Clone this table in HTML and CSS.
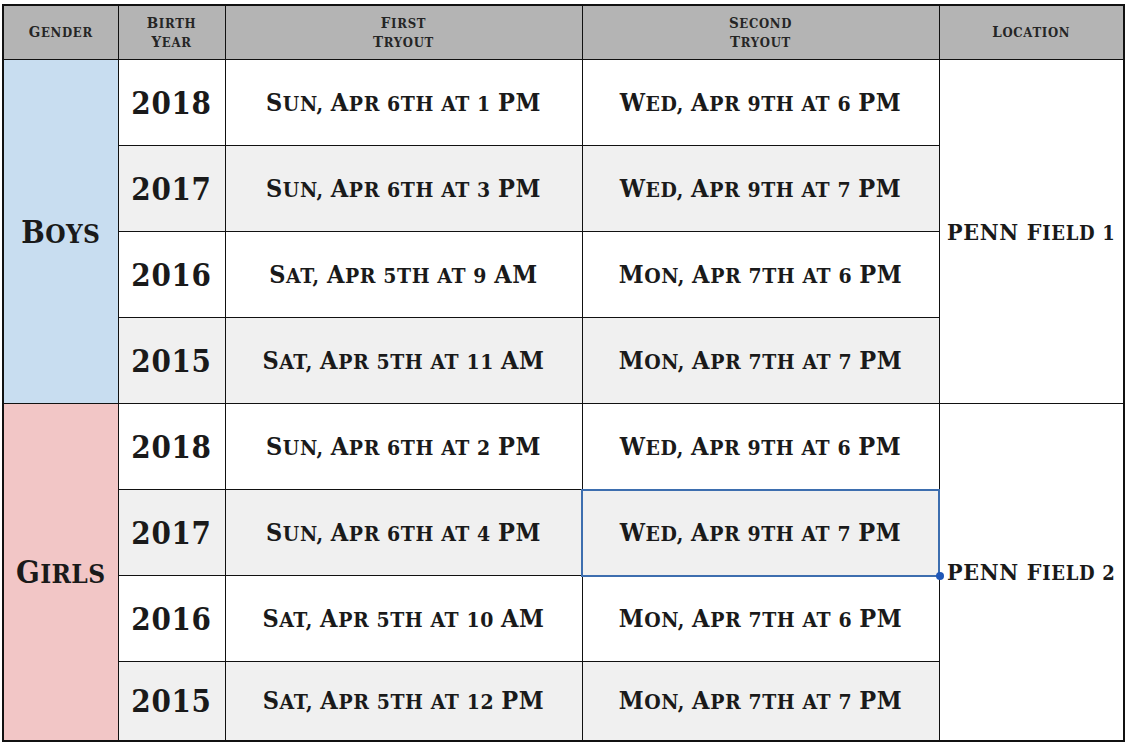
FILE: index.html
```html
<!DOCTYPE html>
<html>
<head>
<meta charset="utf-8">
<link rel="stylesheet" href="styles.css">
</head>
<body>
<div class="page">
<table class="sched">
  <colgroup>
    <col class="c-gender"><col class="c-year"><col class="c-first"><col class="c-second"><col class="c-loc">
  </colgroup>
  <thead>
    <tr>
      <th><span class="k">G</span>ender</th>
      <th><span class="k">B</span>irth<br><span class="k">Y</span>ear</th>
      <th><span class="k">F</span>irst<br><span class="k">T</span>ryout</th>
      <th><span class="k">S</span>econd<br><span class="k">T</span>ryout</th>
      <th><span class="k">L</span>ocation</th>
    </tr>
  </thead>
  <tbody>
    <tr>
      <td class="gender boys" rowspan="4"><span class="k">B</span>oys</td>
      <td class="year">2018</td>
      <td class="date"><span class="k">S</span>un, <span class="k">A</span>pr 6th at 1 <span class="k">PM</span></td>
      <td class="date"><span class="k">W</span>ed, <span class="k">A</span>pr 9th at 6 <span class="k">PM</span></td>
      <td class="loc" rowspan="4"><span class="k">PENN F</span>ield 1</td>
    </tr>
    <tr class="alt">
      <td class="year">2017</td>
      <td class="date"><span class="k">S</span>un, <span class="k">A</span>pr 6th at 3 <span class="k">PM</span></td>
      <td class="date"><span class="k">W</span>ed, <span class="k">A</span>pr 9th at 7 <span class="k">PM</span></td>
    </tr>
    <tr>
      <td class="year">2016</td>
      <td class="date"><span class="k">S</span>at, <span class="k">A</span>pr 5th at 9 <span class="k">AM</span></td>
      <td class="date"><span class="k">M</span>on, <span class="k">A</span>pr 7th at 6 <span class="k">PM</span></td>
    </tr>
    <tr class="alt">
      <td class="year">2015</td>
      <td class="date"><span class="k">S</span>at, <span class="k">A</span>pr 5th at 11 <span class="k">AM</span></td>
      <td class="date"><span class="k">M</span>on, <span class="k">A</span>pr 7th at 7 <span class="k">PM</span></td>
    </tr>
    <tr>
      <td class="gender girls" rowspan="4"><span class="k">G</span>irls</td>
      <td class="year">2018</td>
      <td class="date"><span class="k">S</span>un, <span class="k">A</span>pr 6th at 2 <span class="k">PM</span></td>
      <td class="date"><span class="k">W</span>ed, <span class="k">A</span>pr 9th at 6 <span class="k">PM</span></td>
      <td class="loc" rowspan="4"><span class="k">PENN F</span>ield 2</td>
    </tr>
    <tr class="alt">
      <td class="year">2017</td>
      <td class="date"><span class="k">S</span>un, <span class="k">A</span>pr 6th at 4 <span class="k">PM</span></td>
      <td class="date selected"><span class="k">W</span>ed, <span class="k">A</span>pr 9th at 7 <span class="k">PM</span><span class="handle"></span></td>
    </tr>
    <tr>
      <td class="year">2016</td>
      <td class="date"><span class="k">S</span>at, <span class="k">A</span>pr 5th at 10 <span class="k">AM</span></td>
      <td class="date"><span class="k">M</span>on, <span class="k">A</span>pr 7th at 6 <span class="k">PM</span></td>
    </tr>
    <tr class="alt last">
      <td class="year">2015</td>
      <td class="date"><span class="k">S</span>at, <span class="k">A</span>pr 5th at 12 <span class="k">PM</span></td>
      <td class="date"><span class="k">M</span>on, <span class="k">A</span>pr 7th at 7 <span class="k">PM</span></td>
    </tr>
  </tbody>
</table>
</div>
</body>
</html>
```

FILE: styles.css
```css
html, body {
  margin: 0;
  padding: 0;
  background: #ffffff;
}

.page {
  padding: 4px 0 0 2px;
}

.sched {
  border-collapse: collapse;
  table-layout: fixed;
  width: 1121px;
  font-family: "DejaVu Serif", "Liberation Serif", serif;
  font-stretch: condensed;
  text-transform: uppercase;
  color: #1a1a1a;
  border: 2px solid #111;
}

.c-gender { width: 115px; }
.c-year { width: 107px; }
.c-first { width: 357px; }
.c-second { width: 357px; }
.c-loc { width: 185px; }

.sched th,
.sched td {
  border: 1px solid #111;
  padding: 0;
  text-align: center;
  vertical-align: middle;
}

.sched thead th {
  background: #b4b4b4;
  height: 53px;
  font-size: 13px;
  font-weight: bold;
  line-height: 19px;
  color: #252525;
  letter-spacing: 0.7px;
}

.sched thead th .k {
  font-size: 15px;
}

.sched tbody tr {
  height: 86px;
}

.sched tbody tr.last {
  height: 79px;
}

.sched tbody tr.alt td.year,
.sched tbody tr.alt td.date {
  background: #f0f0f0;
}

.gender {
  font-size: 26px;
  font-weight: bold;
  letter-spacing: 0.4px;
}

.gender .k {
  font-size: 31px;
}

.boys { background: #c8ddf0; }
.girls { background: #f2c6c6; }

.year {
  font-size: 31px;
  font-weight: bold;
  letter-spacing: 0.7px;
}

.date {
  font-size: 21px;
  font-weight: bold;
  letter-spacing: 0.6px;
  white-space: nowrap;
}

.date .k {
  font-size: 25px;
}

.loc {
  font-size: 20px;
  font-weight: bold;
  background: #ffffff;
  white-space: nowrap;
  letter-spacing: 0.7px;
}

.loc .k {
  font-size: 23px;
}

.selected {
  position: relative;
  outline: 2px solid #3d6eaf;
  outline-offset: -1px;
}

.handle {
  position: absolute;
  right: -5px;
  bottom: -5px;
  width: 8px;
  height: 8px;
  border-radius: 50%;
  background: #1f57b8;
}
```
